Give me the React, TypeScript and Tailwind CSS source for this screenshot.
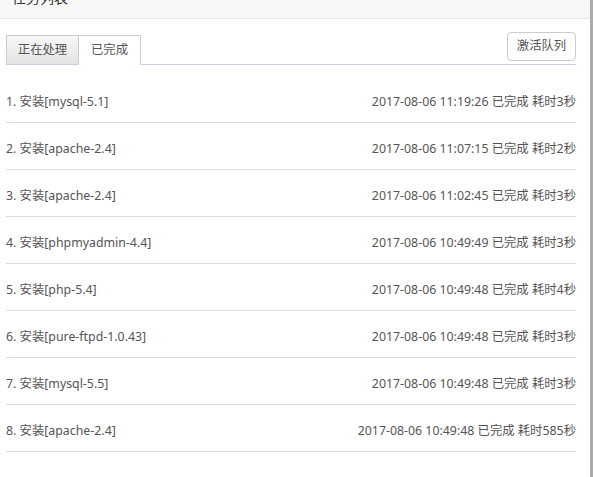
import { useState } from 'react';

const tasks = [
  { id: 1, name: '安装[mysql-5.1]', time: '2017-08-06 11:19:26', cost: 3 },
  { id: 2, name: '安装[apache-2.4]', time: '2017-08-06 11:07:15', cost: 2 },
  { id: 3, name: '安装[apache-2.4]', time: '2017-08-06 11:02:45', cost: 3 },
  { id: 4, name: '安装[phpmyadmin-4.4]', time: '2017-08-06 10:49:49', cost: 3 },
  { id: 5, name: '安装[php-5.4]', time: '2017-08-06 10:49:48', cost: 4 },
  { id: 6, name: '安装[pure-ftpd-1.0.43]', time: '2017-08-06 10:49:48', cost: 3 },
  { id: 7, name: '安装[mysql-5.5]', time: '2017-08-06 10:49:48', cost: 3 },
  { id: 8, name: '安装[apache-2.4]', time: '2017-08-06 10:49:48', cost: 585 },
];

const App = () => {
  const [tab, setTab] = useState(1);

  return (
    <div className="flex w-[593px] h-[477px] overflow-hidden bg-white text-[12.35px] text-[#555] font-['Noto_Sans','Noto_Sans_CJK_SC',sans-serif]">
      <div className="flex flex-col w-[590px]">
        <div className="h-[19px] bg-[#f7f7f7] border-b border-[#e5e5e5] overflow-hidden px-[12px]">
          <div className="-mt-[12px] text-[14px] leading-[19px] text-[#333]">任务列表</div>
        </div>

        <div className="pl-[6px] pr-[14px]">
          <div className="flex items-end mt-[13px]">
            <button
              onClick={() => setTab(0)}
              className={
                tab === 0
                  ? 'h-[30px] w-[73px] bg-white border border-[#cfcfe0] border-b-0'
                  : 'h-[30px] w-[73px] bg-gradient-to-b from-[#f7f7f7] to-[#e4e4e4] border border-[#cccccc] border-b-[#cfcfe0]'
              }
            >
              正在处理
            </button>
            <button
              onClick={() => setTab(1)}
              className={
                tab === 1
                  ? 'h-[30px] w-[62px] bg-white border border-[#cfcfe0] border-b-0 border-l-0'
                  : 'h-[30px] w-[62px] bg-gradient-to-b from-[#f7f7f7] to-[#e4e4e4] border border-[#cccccc] border-b-[#cfcfe0]'
              }
            >
              已完成
            </button>
            <div className="flex-1 flex justify-end border-b border-[#cfcfe0] pb-[3px]">
              <button className="h-[29px] w-[69px] bg-white border border-[#cccccc] rounded-[4px]">
                激活队列
              </button>
            </div>
          </div>

          <ul className="mt-[11px]">
            {tasks.map((t) => (
              <li
                key={t.id}
                className="flex justify-between pt-[17px] pb-[12px] leading-[17px] border-b border-[#dcdce8]"
              >
                <span>
                  {t.id}. {t.name}
                </span>
                <span>
                  {t.time} 已完成 耗时{t.cost}秒
                </span>
              </li>
            ))}
          </ul>
        </div>
      </div>
      <div className="w-[3px] bg-[#ababab]" />
    </div>
  );
};

export default App;
